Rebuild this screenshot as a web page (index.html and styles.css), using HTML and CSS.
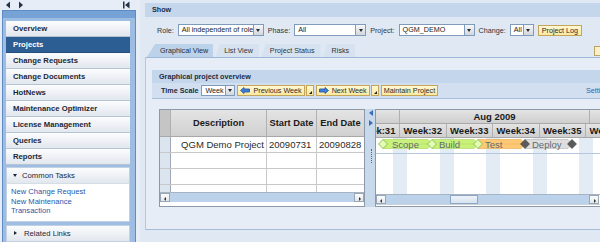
FILE: index.html
```html
<!DOCTYPE html>
<html lang="en">
<head>
  <meta charset="UTF-8">
  <title>Projects - Graphical View</title>
  <link rel="stylesheet" href="styles.css">
</head>
<body>
  <div class="page">
    <aside class="side">
      <div class="side-nav">
        <svg width="140" height="10" viewBox="0 0 140 10">
          <polygon points="6,5 10,1.5 10,8.5" fill="#22324a"/>
          <polygon points="23,5 19,1.5 19,8.5" fill="#22324a"/>
          <rect x="123" y="1.5" width="1.5" height="7" fill="#22324a"/>
          <polygon points="125,5 129.5,1.5 129.5,8.5" fill="#22324a"/>
        </svg>
      </div>
      <div class="side-frame">
        <ul class="menu">
          <li>Overview</li>
          <li class="active">Projects</li>
          <li>Change Requests</li>
          <li>Change Documents</li>
          <li>HotNews</li>
          <li>Maintenance Optimizer</li>
          <li>License Management</li>
          <li>Queries</li>
          <li>Reports</li>
        </ul>
        <div class="box">
          <div class="box-head"><span class="tri-down"></span>Common Tasks</div>
          <div class="box-body">
            <a href="#">New Change Request</a>
            <a href="#">New Maintenance<br>Transaction</a>
          </div>
        </div>
        <div class="box">
          <div class="box-head"><span class="tri-right"></span>Related Links</div>
        </div>
      </div>
    </aside>

    <main class="main">
      <div class="show-bar">Show</div>

      <div class="filters">
        <label>Role:</label>
        <div class="select"><div class="select-box w-role">All independent of role</div><div class="select-btn"></div></div>
        <label>Phase:</label>
        <div class="select"><div class="select-box w-phase">All</div><div class="select-btn"></div></div>
        <label>Project:</label>
        <div class="select"><div class="select-box w-project">QGM_DEMO</div><div class="select-btn"></div></div>
        <label>Change:</label>
        <div class="select"><div class="select-box w-change">All</div><div class="select-btn"></div></div>
        <div class="btn">Project Log</div>
      </div>

      <div class="tabs">
        <div class="tab active">Graphical View</div>
        <div class="tab">List View</div>
        <div class="tab">Project Status</div>
        <div class="tab">Risks</div>
        <div class="tab-edge"></div>
      </div>

      <div class="panel">
        <div class="section-head">Graphical project overview</div>
        <div class="toolbar">
          <span class="tb-label">Time Scale</span>
          <div class="select"><div class="select-box w-week">Week</div><div class="select-btn"></div></div>
          <div class="btn">
            <svg width="10" height="7" viewBox="0 0 10 7"><polygon points="0.5,3.5 4,0.5 4,2 9.5,2 9.5,5 4,5 4,6.5" fill="#3f7fdc" stroke="#1c4f9e" stroke-width="0.8"/></svg>
            Previous Week
          </div>
          <div class="btn-mini"></div>
          <div class="btn">
            <svg width="10" height="7" viewBox="0 0 10 7"><polygon points="9.5,3.5 6,0.5 6,2 0.5,2 0.5,5 6,5 6,6.5" fill="#3f7fdc" stroke="#1c4f9e" stroke-width="0.8"/></svg>
            Next Week
          </div>
          <div class="btn-mini"></div>
          <div class="btn">Maintain Project</div>
          <a class="settings" href="#">Settings</a>
        </div>

        <div class="chart">
          <div class="grid">
            <div class="grid-row grid-head">
              <div class="cell c-sel"></div>
              <div class="cell c-desc center">Description</div>
              <div class="cell c-start center">Start Date</div>
              <div class="cell c-end center">End Date</div>
            </div>
            <div class="grid-row">
              <div class="cell c-sel"></div>
              <div class="cell c-desc right">QGM Demo Project</div>
              <div class="cell c-start">20090731</div>
              <div class="cell c-end">20090828</div>
            </div>
            <div class="grid-row">
              <div class="cell c-sel"></div>
              <div class="cell c-desc"></div>
              <div class="cell c-start"></div>
              <div class="cell c-end"></div>
            </div>
            <div class="grid-row">
              <div class="cell c-sel"></div>
              <div class="cell c-desc"></div>
              <div class="cell c-start"></div>
              <div class="cell c-end"></div>
            </div>
            <div class="grid-row part">
              <div class="cell c-sel"></div>
              <div class="cell c-desc"></div>
              <div class="cell c-start"></div>
              <div class="cell c-end"></div>
            </div>
            <div class="hscroll">
              <div class="arrow left"></div>
              <div class="track"></div>
              <div class="arrow right"></div>
            </div>
          </div>

          <div class="splitter">
            <span class="sp-left"></span>
            <span class="sp-right"></span>
            <span class="sp-grip"></span>
          </div>

          <div class="gantt">
            <div class="g-month">
              <div class="g-cell m-jul"></div>
              <div class="g-cell m-aug">Aug 2009</div>
            </div>
            <div class="g-weeks">
              <div class="g-cell week">Week:31</div>
              <div class="g-cell week">Week:32</div>
              <div class="g-cell week">Week:33</div>
              <div class="g-cell week">Week:34</div>
              <div class="g-cell week">Week:35</div>
              <div class="g-cell week">Week:36</div>
            </div>
            <div class="g-body">
              <span class="stripe s1"></span>
              <span class="stripe s2"></span>
              <span class="stripe s3"></span>
              <span class="stripe s4"></span>
              <span class="stripe s5"></span>
              <div class="g-barrow">
                <svg class="bars" width="224" height="15" viewBox="0 0 224 15">
                  <polygon points="7,1.5 52,1.5 56,6 52,10.5 7,10.5" fill="#c8f07a" stroke="#a6d455" stroke-width="0.6"/>
                  <polygon points="56,1.5 98,1.5 102,6 98,10.5 56,10.5" fill="#c8f07a" stroke="#a6d455" stroke-width="0.6"/>
                  <polygon points="102,1.5 145,1.5 149,6 145,10.5 102,10.5" fill="#ffc874" stroke="#e8a848" stroke-width="0.6"/>
                  <polygon points="149,1.5 192,1.5 196,6 192,10.5 149,10.5" fill="#dedede" stroke="#b4b4b4" stroke-width="0.6"/>
                  <line x1="45" y1="6" x2="54" y2="6" stroke="#8cbf3a" stroke-width="0.6" stroke-dasharray="1 1.5"/>
                  <line x1="84" y1="6" x2="100" y2="6" stroke="#8cbf3a" stroke-width="0.6" stroke-dasharray="1 1.5"/>
                  <line x1="126" y1="6" x2="147" y2="6" stroke="#d0943a" stroke-width="0.6" stroke-dasharray="1 1.5"/>
                  <polygon points="2.5,6 7,1.5 11.5,6 7,10.5" fill="#e6fbb8" stroke="#7cc23c" stroke-width="0.9"/>
                  <polygon points="51.5,6 56,1.5 60.5,6 56,10.5" fill="#e6fbb8" stroke="#7cc23c" stroke-width="0.9"/>
                  <polygon points="97.5,6 102,1.5 106.5,6 102,10.5" fill="#e6fbb8" stroke="#7cc23c" stroke-width="0.9"/>
                  <polygon points="144.5,6 149,1.5 153.5,6 149,10.5" fill="#5a5a5a" stroke="#3a3a3a" stroke-width="0.6"/>
                  <polygon points="191.5,6 196,1.5 200.5,6 196,10.5" fill="#5a5a5a" stroke="#3a3a3a" stroke-width="0.6"/>
                  <text x="16" y="9.6" class="bar-text">Scope</text>
                  <text x="63" y="9.6" class="bar-text">Build</text>
                  <text x="109" y="9.6" class="bar-text">Test</text>
                  <text x="156" y="9.6" class="bar-text">Deploy</text>
                </svg>
              </div>
            </div>
            <div class="hscroll g-scroll">
              <div class="arrow left"></div>
              <div class="track">
                <span class="thumb"></span>
              </div>
              <div class="arrow right"></div>
            </div>
          </div>
        </div>
      </div>
    </main>
  </div>
</body>
</html>
```

FILE: styles.css
```css
* {
  box-sizing: border-box;
}
body {
  margin: 0;
  width: 600px;
  height: 242px;
  overflow: hidden;
  background: #dfe8f3;
  font-family: "Liberation Sans", Arial, sans-serif;
  font-size: 7.2px;
  color: #2b2b2b;
}
.page {
  display: flex;
  height: 242px;
}

/* left navigation */
.side {
  width: 140px;
  flex: none;
  background: #e6edf6;
}
.side-nav {
  height: 10px;
}
.side-nav svg {
  display: block;
}
.side-frame {
  margin-left: 2px;
  width: 134px;
  height: 232px;
  border: 1px solid #5f8cc4;
  border-bottom: none;
  background: linear-gradient(#77a2d6 0, #77a2d6 7px, #9dbde3 7px);
  padding: 10px 5px 0 3px;
}
.menu {
  list-style: none;
  margin: 0;
  padding: 0;
}
.menu li {
  height: 16px;
  line-height: 15px;
  padding-left: 7px;
  border-bottom: 1px solid #b6c3d2;
  background: linear-gradient(#fbfcfd, #e2e7ee);
  font-weight: bold;
  font-size: 7.7px;
  color: #1c2838;
}
.menu li.active {
  background: #2d5e93;
  color: #fff;
  border-bottom-color: #234d7a;
}
.box {
  margin-top: 2px;
  border: 1px solid #c3d2e3;
  background: #fff;
}
.box + .box {
  margin-top: 3px;
}
.box-head {
  height: 15px;
  display: flex;
  align-items: center;
  padding-left: 6px;
  background: linear-gradient(#fbfcfd, #e2e7ee);
  font-size: 7.7px;
  color: #1c2838;
}
.tri-down {
  width: 0;
  height: 0;
  border-left: 2.5px solid transparent;
  border-right: 2.5px solid transparent;
  border-top: 3px solid #1c2838;
  margin-right: 5px;
}
.tri-right {
  width: 0;
  height: 0;
  border-top: 2.5px solid transparent;
  border-bottom: 2.5px solid transparent;
  border-left: 3px solid #1c2838;
  margin: 0 7px 0 1px;
}
.box-body {
  padding: 3px 4px 5px;
  border-top: 1px solid #d5dde7;
}
.box-body a {
  display: block;
  color: #2a56aa;
  text-decoration: none;
  font-size: 7.6px;
  line-height: 9.5px;
}

/* main area */
.main {
  flex: 1;
  min-width: 0;
  margin-left: 5px;
  overflow: hidden;
}
.show-bar {
  margin-top: 3px;
  height: 14px;
  line-height: 14px;
  padding-left: 7px;
  background: #c3d6ec;
  font-weight: bold;
  color: #1d2c40;
}
.filters {
  display: flex;
  align-items: center;
  height: 12px;
  margin-top: 7px;
  padding-left: 12px;
}
.filters label {
  margin-right: 4px;
  color: #333;
}
.select {
  display: flex;
  height: 12px;
  margin-right: 4px;
}
.select-box {
  border: 1px solid #7f9bbb;
  border-right: none;
  background: #fff;
  padding-left: 3px;
  line-height: 10px;
  white-space: nowrap;
  overflow: hidden;
  color: #222;
}
.w-role { width: 75px; }
.w-phase { width: 61px; }
.w-project { width: 65px; }
.w-change { width: 13px; }
.w-week { width: 24px; }
.select-btn {
  width: 11px;
  border: 1px solid #7f9bbb;
  background: linear-gradient(#f6f7f9, #d2d7de);
  display: flex;
  align-items: center;
  justify-content: center;
}
.select-btn::after {
  content: "";
  border-left: 2.5px solid transparent;
  border-right: 2.5px solid transparent;
  border-top: 3px solid #2b2b2b;
}
.btn {
  height: 11px;
  display: flex;
  align-items: center;
  gap: 3px;
  padding: 0 2px;
  border: 1px solid #c3a659;
  background: linear-gradient(#fff8d2, #fbe8a0);
  color: #2b2b2b;
  white-space: nowrap;
}
.filters .btn {
  padding: 0 3px;
}
.btn-mini {
  width: 8px;
  height: 11px;
  margin: 0 2px 0 1px;
  border: 1px solid #c3a659;
  background: linear-gradient(#fff8d2, #fbe8a0);
  position: relative;
}
.btn-mini::after {
  content: "";
  position: absolute;
  right: 1px;
  bottom: 1px;
  border-left: 3px solid transparent;
  border-bottom: 3px solid #222;
}

/* tabs */
.tabs {
  display: flex;
  height: 13px;
  margin-top: 8px;
}
.tab {
  height: 13px;
  line-height: 13px;
  padding: 0 6px 0 9px;
  margin-right: 2px;
  background: #d6e2f0;
  clip-path: polygon(5px 0, 100% 0, 100% 100%, 0 100%);
  color: #333;
}
.tab.active {
  margin-left: 2px;
  padding: 0 5px 0 13px;
  background: #bcd1ea;
  clip-path: polygon(8px 0, 100% 0, 100% 100%, 0 100%);
  color: #1d2c40;
}
.tab-edge {
  margin: 2px 0 0 auto;
  width: 6px;
  height: 10px;
  border: 1px solid #b9a462;
  border-right: none;
  background: #fbf1c8;
}

/* tab content */
.panel {
  height: 173px;
  border-top: 1px solid #9db8d8;
  border-left: 1px solid #b4c8e0;
  border-bottom: 1px solid #a6bdd9;
  background: #e6edf7;
  padding: 12px 0 0 6px;
  overflow: hidden;
}
.section-head {
  height: 13px;
  line-height: 13px;
  padding-left: 7px;
  background: #c3d6ec;
  font-weight: bold;
  color: #1d2c40;
}
.toolbar {
  height: 16px;
  display: flex;
  align-items: center;
  padding-left: 9px;
  background: #d1dff0;
  border-bottom: 1px solid #a9c0dc;
}
.tb-label {
  font-weight: bold;
  color: #1d2c40;
  margin-right: 3px;
}
.toolbar .select {
  height: 11px;
  margin-right: 2px;
}
.toolbar .select-btn {
  width: 10px;
}
.settings {
  margin-left: auto;
  margin-right: -16px;
  color: #2f5fae;
  text-decoration: none;
  width: 30px;
}

/* grid and gantt */
.chart {
  display: flex;
  height: 98px;
  margin: 10px 0 0 7px;
}
.grid {
  width: 206px;
  flex: none;
  border: 1px solid #8d99a6;
  background: #fff;
  display: flex;
  flex-direction: column;
  overflow: hidden;
}
.grid-row {
  display: flex;
  height: 16px;
  flex: none;
  border-bottom: 1px solid #c8c8c8;
  font-size: 9.5px;
  color: #2a2a2a;
}
.grid-row.part {
  height: 7px;
  border-bottom: none;
}
.grid-head {
  height: 27px;
  background: linear-gradient(#e4e4e4, #d0d0d0);
  border-bottom-color: #a8a8a8;
  font-weight: bold;
  font-size: 9.3px;
  color: #1a1a1a;
}
.cell {
  border-right: 1px solid #c8c8c8;
  display: flex;
  align-items: center;
  padding: 0 2px;
  white-space: nowrap;
  overflow: hidden;
}
.cell.center {
  justify-content: center;
}
.cell.right {
  justify-content: flex-end;
}
.c-sel {
  width: 11px;
  background: #dbe4ef;
  border-right-color: #9eaab8;
}
.grid-head .c-sel {
  background: #c5c5c5;
}
.c-desc { width: 96px; }
.c-start { width: 50px; }
.c-end {
  width: 47px;
  border-right: none;
}
.grid-head .cell {
  border-right-color: #b0b0b0;
}
.hscroll {
  height: 10px;
  flex: none;
  display: flex;
  border-top: 1px solid #a5b3c2;
}
.arrow {
  width: 10px;
  background: linear-gradient(#fdfdfd, #e2e6ea);
  border: 1px solid #9aa6b4;
  position: relative;
}
.arrow::after {
  content: "";
  position: absolute;
  top: 2.5px;
  border-top: 2px solid transparent;
  border-bottom: 2px solid transparent;
}
.arrow.left::after {
  left: 3px;
  border-right: 2.5px solid #333;
}
.arrow.right::after {
  left: 3.5px;
  border-left: 2.5px solid #333;
}
.track {
  flex: 1;
  background: #bcd1ea;
  position: relative;
}
.splitter {
  width: 10px;
  flex: none;
  background: #c9d9ec;
  position: relative;
}
.sp-left,
.sp-right {
  position: absolute;
  left: 4px;
  width: 0;
  height: 0;
  border-top: 3px solid transparent;
  border-bottom: 3px solid transparent;
}
.sp-left {
  top: 1px;
  border-right: 4px solid #3b6db5;
}
.sp-right {
  top: 11px;
  border-left: 4px solid #3b6db5;
}
.sp-grip {
  position: absolute;
  left: 6px;
  top: 40px;
  height: 14px;
  border-left: 1px dotted #3b6db5;
}
.gantt {
  flex: 1;
  min-width: 0;
  border: 1px solid #8d99a6;
  border-right: none;
  background: #fff;
  display: flex;
  flex-direction: column;
  overflow: hidden;
}
.g-month,
.g-weeks {
  height: 14px;
  flex: none;
  display: flex;
  background: linear-gradient(#e4e4e4, #cfcfcf);
  border-bottom: 1px solid #a8a8a8;
  font-weight: bold;
  font-size: 9.5px;
  color: #1a1a1a;
}
.g-cell {
  flex: none;
  display: flex;
  align-items: center;
  justify-content: center;
  border-right: 1px solid #b0b0b0;
  white-space: nowrap;
}
.m-jul { width: 24px; }
.m-aug { width: 190px; }
.g-weeks {
  margin-left: -22.5px;
}
.week { width: 46.5px; }
.g-body {
  height: 56px;
  flex: none;
  position: relative;
}
.stripe {
  position: absolute;
  top: 0;
  bottom: 0;
  width: 14px;
  background: #e3ebf5;
}
.s1 { left: 17px; }
.s2 { left: 63.5px; }
.s3 { left: 110px; }
.s4 { left: 156.5px; }
.s5 { left: 203px; }
.g-barrow {
  position: relative;
  height: 16px;
  border-bottom: 1px solid #b5c7dc;
}
.bars {
  display: block;
}
.bar-text {
  font-family: "Liberation Sans", Arial, sans-serif;
  font-size: 9.5px;
  fill: #5e6a72;
}
.g-scroll {
  height: 11px;
  border-bottom: 1px solid #c9d2dc;
}
.g-scroll .arrow.right {
  width: 10px;
  margin-right: 1px;
}
.thumb {
  position: absolute;
  left: 64px;
  top: 0;
  width: 28px;
  height: 100%;
  background: linear-gradient(#eef3f9, #d6e2ef);
  border: 1px solid #8ea6c2;
}
```
